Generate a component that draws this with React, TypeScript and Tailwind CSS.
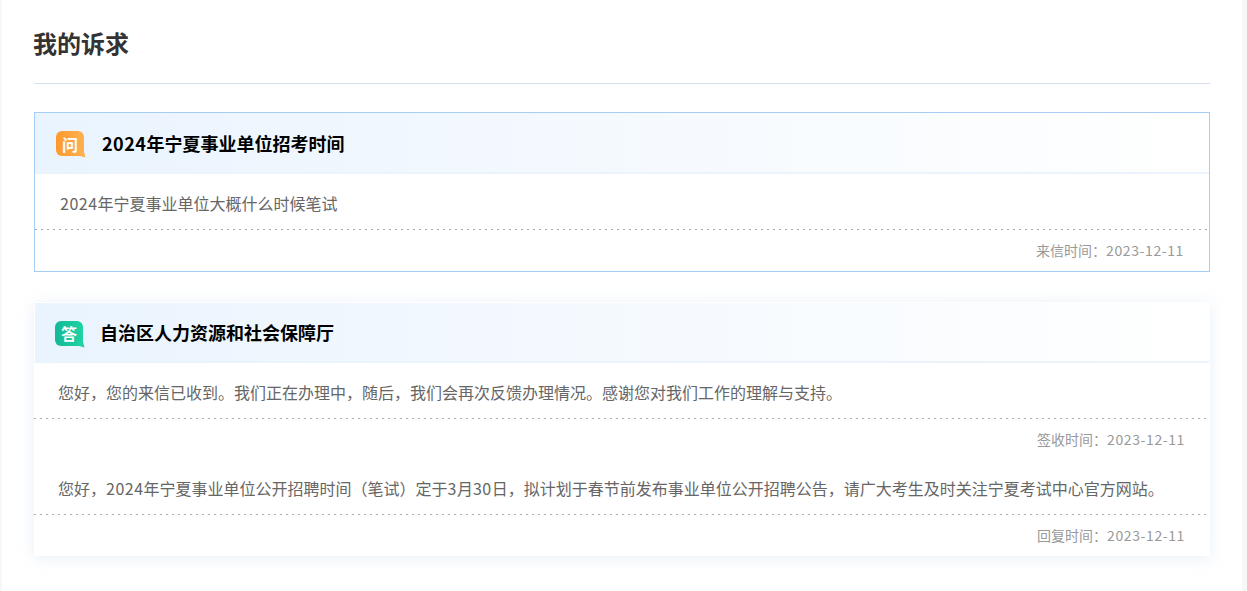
import type { ReactNode } from "react";

const font = { fontFamily: '"Noto Sans CJK SC", sans-serif' };

function Bubble({ label, tone }: { label: string; tone: "orange" | "green" }) {
  return (
    <div className="relative h-[25px] w-[28px] shrink-0">
      <div className={`flex h-[25px] w-[28px] items-center justify-center rounded-[6px] rounded-br-none bg-gradient-to-r text-[16px] font-bold leading-none text-white ${tone === "orange" ? "from-[#fd9a29] to-[#fcb04f]" : "from-[#13b998] to-[#1fd3a2]"}`}>
        {label}
      </div>
      <svg className="absolute left-[24px] top-[21px]" width="6" height="6" viewBox="0 0 6 6">
        <path d="M0 0H4V0L5.5 5.5L0 4Z" fill={tone === "orange" ? "#fcb04f" : "#1fd3a2"} />
      </svg>
    </div>
  );
}

function Header({ label, tone, title, box }: { label: string; tone: "orange" | "green"; title: ReactNode; box: string }) {
  return (
    <div className={`flex items-center border-b-2 border-[#ebf3fc] bg-gradient-to-r from-[#eaf4fe] to-white pt-[2px] ${box}`}>
      <Bubble label={label} tone={tone} />
      <h3 className="-translate-y-[1px] text-[18px] font-bold leading-none text-black">{title}</h3>
    </div>
  );
}

function Num({ children }: { children: ReactNode }) {
  return <span className="tracking-[0.5px]">{children}</span>;
}

function Row({ text, label, pad }: { text: ReactNode; label: string; pad: string }) {
  return (
    <>
      <div className={`text-[16px] leading-[24px] text-[#666666] ${pad}`}>{text}</div>
      <div className="h-px bg-[repeating-linear-gradient(90deg,#aaaaaa_0,#aaaaaa_2px,transparent_2px,transparent_6px)]" />
      <div className="flex h-[41px] items-center justify-end pb-[1px] pr-[25px] text-[14px] text-[#999999]">
        {label}：<span className="tracking-[0.6px]">2023-12-11</span>
      </div>
    </>
  );
}

export default function App() {
  return (
    <div className="flex h-[591px] overflow-hidden bg-white" style={font}>
      <div className="w-[2px] shrink-0 bg-[#f7f7f7]" />
      <main className="ml-[32px] w-[1176px] shrink-0">
        <h2 className="flex h-[84px] items-center border-b border-[#d5e1ee] pt-[2px] text-[24px] font-bold leading-none text-[#333333]">
          <span className="-ml-px">我的诉求</span>
        </h2>
        <section className="mt-[28px] border border-[#a6cdf3]">
          <Header
            label="问"
            tone="orange"
            title={<><Num>2024</Num>年宁夏事业单位招考时间</>}
            box="h-[61px] gap-[18px] pl-[21px]"
          />
          <Row text={<><Num>2024</Num>年宁夏事业单位大概什么时候笔试</>} label="来信时间" pad="pb-[14px] pl-[25px] pt-[17px]" />
        </section>
        <section className="mt-[30px] shadow-[0_2px_14px_rgba(190,210,235,0.35)]">
          <div className="px-[1px] pt-[1px]">
            <Header label="答" tone="green" title="自治区人力资源和社会保障厅" box="h-[60px] gap-[17px] pl-[20px]" />
          </div>
          <Row text="您好，您的来信已收到。我们正在办理中，随后，我们会再次反馈办理情况。感谢您对我们工作的理解与支持。" label="签收时间" pad="pb-[14px] pl-[24px] pt-[17px]" />
          <Row
            text={<>您好，<Num>2024</Num>年宁夏事业单位公开招聘时间（笔试）定于<Num>3</Num>月<Num>30</Num>日，拟计划于春节前发布事业单位公开招聘公告，请广大考生及时关注宁夏考试中心官方网站。</>}
            label="回复时间"
            pad="pb-[14px] pl-[24px] pt-[16px]"
          />
        </section>
      </main>
      <div className="ml-auto w-[5px] shrink-0 bg-[#f7f7f7]" />
    </div>
  );
}
